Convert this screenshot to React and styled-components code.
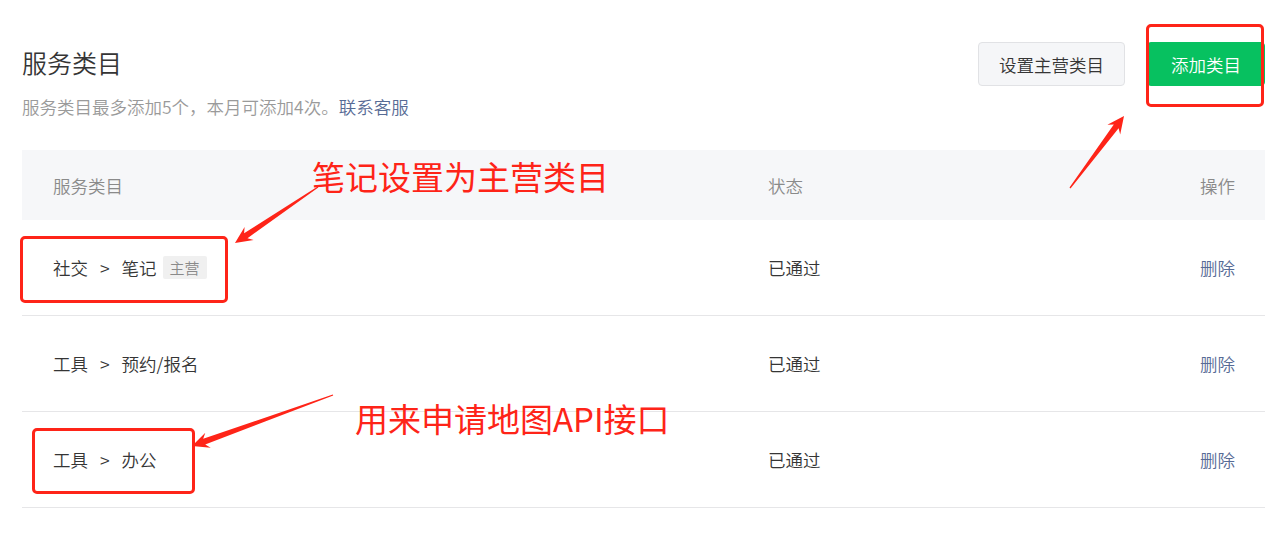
import React from "react";
import styled, { createGlobalStyle } from "styled-components";

const Global = createGlobalStyle`
  html, body { margin: 0; padding: 0; background: #fff; }
  body { font-family: "Noto Sans CJK SC", "Noto Sans", sans-serif; color: #353535; }
`;

const RED = "#fe2418";

const Page = styled.div`
  position: relative;
  width: 1284px;
  height: 537px;
  box-sizing: border-box;
  padding: 42px 19px 0 22px;
  overflow: hidden;
  font-weight: 350;
`;

const Head = styled.div`
  display: flex;
  justify-content: space-between;
  align-items: flex-start;
`;

const TitleBlock = styled.div`
  padding-top: 3px;
`;

const Title = styled.h2`
  margin: 0;
  font-size: 25px;
  line-height: 35px;
  font-weight: 350;
  color: #353535;
`;

const Sub = styled.p`
  margin: 14px 0 0;
  font-size: 17.5px;
  line-height: 25px;
  color: #9a9a9a;
`;

const Link = styled.a`
  color: #576b95;
  text-decoration: none;
`;

const Actions = styled.div`
  display: flex;
  gap: 22px;
`;

const Button = styled.button`
  height: 44px;
  padding: 0 ${(p) => (p.$primary ? "23px" : "20px")};
  border-radius: 4px;
  font-family: inherit;
  font-weight: 350;
  font-size: 17.5px;
  border: 1px solid ${(p) => (p.$primary ? "#07c160" : "#e1e2e5")};
  background: ${(p) => (p.$primary ? "#07c160" : "#f5f6f8")};
  color: ${(p) => (p.$primary ? "#fff" : "#353535")};
`;

const Table = styled.div`
  margin-top: 31px;
`;

const Row = styled.div`
  display: grid;
  grid-template-columns: 715px 1fr auto;
  align-items: center;
  padding: 0 30px 0 31px;
  height: ${(p) => (p.$head ? "70px" : "95px")};
  background: ${(p) => (p.$head ? "#f6f7f9" : "#fff")};
  border-bottom: ${(p) => (p.$head ? "none" : "1px solid #e6e6e8")};
  font-size: 17.5px;
  color: ${(p) => (p.$head ? "#8a8a8a" : "#353535")};
`;

const Cell = styled.div`
  display: flex;
  align-items: center;
  white-space: nowrap;
`;

const Sep = styled.span`
  margin: 0 12px;
`;

const Tag = styled.span`
  margin-left: 6px;
  height: 23px;
  padding: 0 7px;
  display: inline-flex;
  align-items: center;
  background: #f0f0f0;
  border-radius: 2px;
  font-size: 15px;
  color: #8a8a8a;
`;

const Op = styled.a`
  color: #576b95;
  text-decoration: none;
`;

const Box = styled.div`
  position: absolute;
  box-sizing: border-box;
  border: 3px solid ${RED};
  border-radius: 5px;
  pointer-events: none;
`;

const Note = styled.div`
  position: absolute;
  font-size: 33px;
  line-height: 33px;
  font-weight: 400;
  color: ${RED};
  white-space: nowrap;
`;

const Overlay = styled.svg`
  position: absolute;
  left: 0;
  top: 0;
  pointer-events: none;
`;

function arrowPoints(tx, ty, px, py) {
  const dx = px - tx;
  const dy = py - ty;
  const len = Math.hypot(dx, dy);
  const ux = dx / len;
  const uy = dy / len;
  const nx = -uy;
  const ny = ux;
  const head = 17;
  const notch = 13;
  const bx = px - ux * notch;
  const by = py - uy * notch;
  const cx = px - ux * head;
  const cy = py - uy * head;
  const pts = [
    [tx + nx * 0.6, ty + ny * 0.6],
    [bx + nx * 3, by + ny * 3],
    [cx + nx * 8, cy + ny * 8],
    [px, py],
    [cx - nx * 8, cy - ny * 8],
    [bx - nx * 3, by - ny * 3],
    [tx - nx * 0.6, ty - ny * 0.6],
  ];
  return pts.map((p) => p.map((v) => v.toFixed(1)).join(",")).join(" ");
}

const rows = [
  { path: ["社交", "笔记"], tag: "主营" },
  { path: ["工具", "预约/报名"] },
  { path: ["工具", "办公"] },
];

export default function App() {
  return (
    <>
      <Global />
      <Page>
        <Head>
          <TitleBlock>
            <Title>服务类目</Title>
            <Sub>
              服务类目最多添加5个，本月可添加4次。<Link href="#">联系客服</Link>
            </Sub>
          </TitleBlock>
          <Actions>
            <Button>设置主营类目</Button>
            <Button $primary>添加类目</Button>
          </Actions>
        </Head>
        <Table>
          <Row $head>
            <Cell>服务类目</Cell>
            <Cell>状态</Cell>
            <Cell>操作</Cell>
          </Row>
          {rows.map((r, i) => (
            <Row key={i}>
              <Cell>
                {r.path[0]}
                <Sep>&gt;</Sep>
                {r.path[1]}
                {r.tag && <Tag>{r.tag}</Tag>}
              </Cell>
              <Cell>已通过</Cell>
              <Cell>
                <Op href="#">删除</Op>
              </Cell>
            </Row>
          ))}
        </Table>

        <Box style={{ left: 1146, top: 24, width: 118, height: 83 }} />
        <Box style={{ left: 20, top: 236, width: 208, height: 67 }} />
        <Box style={{ left: 32, top: 428, width: 163, height: 66 }} />
        <Note style={{ left: 312, top: 160 }}>笔记设置为主营类目</Note>
        <Note style={{ left: 355, top: 402 }}>用来申请地图API接口</Note>
        <Overlay width="1284" height="537" viewBox="0 0 1284 537">
          <polygon fill={RED} points={arrowPoints(318, 187, 235, 243)} />
          <polygon fill={RED} points={arrowPoints(1070, 188, 1124, 116)} />
          <polygon fill={RED} points={arrowPoints(333, 395, 192, 446)} />
        </Overlay>
      </Page>
    </>
  );
}
